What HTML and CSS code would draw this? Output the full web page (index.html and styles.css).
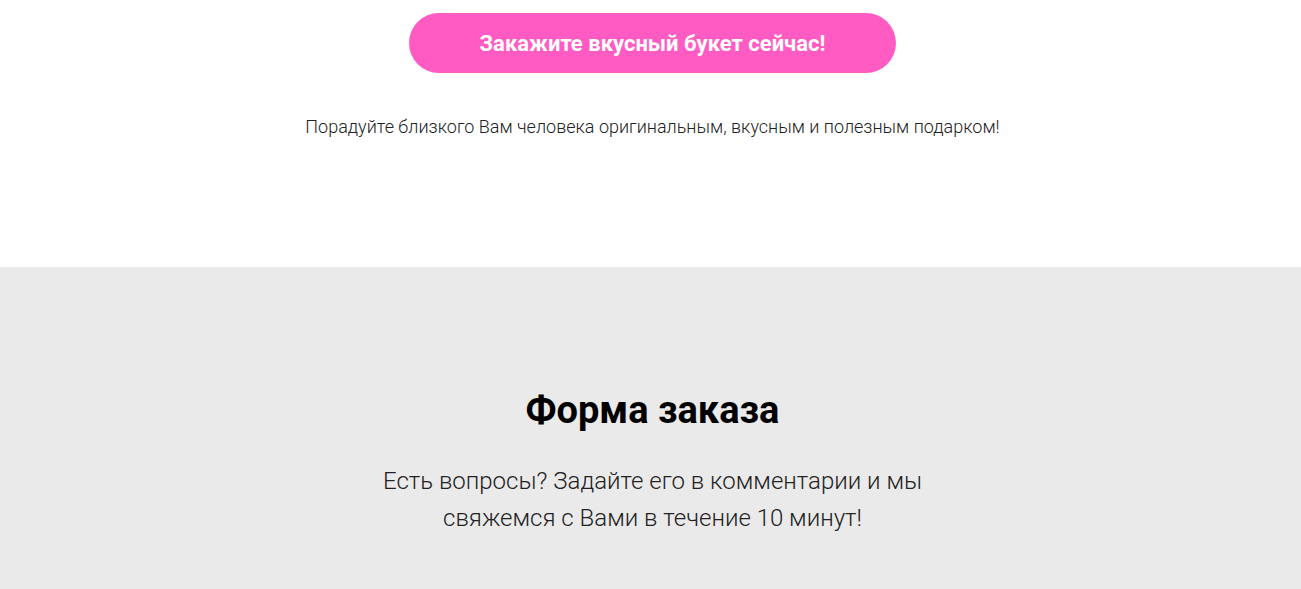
FILE: index.html
```html
<!DOCTYPE html>
<html lang="ru">
<head>
    <meta charset="UTF-8">
    <title>Вкусные букеты</title>
    <link rel="stylesheet" href="styles.css">
</head>
<body>

<section class="cta">
    <a class="cta-button" href="#order">Закажите вкусный букет сейчас!</a>
    <p class="cta-note">Порадуйте близкого Вам человека оригинальным, вкусным и полезным подарком!</p>
</section>

<section class="order" id="order">
    <h2 class="order-title">Форма заказа</h2>
    <p class="order-lead">Есть вопросы? Задайте его в комментарии и мы свяжемся с Вами в течение 10 минут!</p>
</section>

</body>
</html>
```

FILE: styles.css
```css
body {
    margin: 0;
    font-family: Roboto, "Liberation Sans", sans-serif;
    color: #000;
    background: #fff;
}

section {
    padding-left: 4px;
}

.cta {
    display: flex;
    flex-direction: column;
    align-items: center;
    padding-top: 13px;
    height: 254px;
}

.cta-button {
    display: flex;
    align-items: center;
    justify-content: center;
    width: 487px;
    height: 60px;
    border-radius: 30px;
    background: #ff5bc2;
    color: #fff;
    font-size: 22px;
    font-weight: 700;
    text-decoration: none;
}

.cta-note {
    margin: 42px 0 0;
    font-size: 18px;
    font-weight: 300;
    line-height: 24px;
    color: #222;
}

.order {
    background: #eaeaea;
    padding-top: 120px;
    padding-bottom: 60px;
    text-align: center;
}

.order-title {
    margin: 0;
    font-size: 38px;
    font-weight: 700;
    line-height: 46px;
}

.order-lead {
    max-width: 560px;
    margin: 30px auto 0;
    font-size: 24px;
    font-weight: 300;
    line-height: 37px;
    color: #222;
}
```
